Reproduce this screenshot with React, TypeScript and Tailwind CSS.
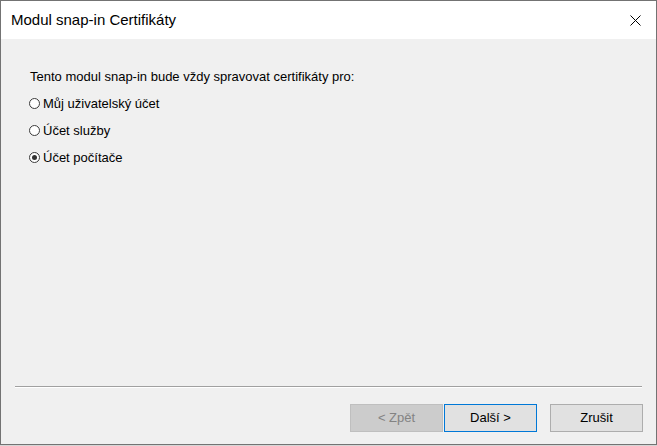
import React from "react";

const font = { fontFamily: '"Liberation Sans", Arial, sans-serif' };

function Radio({ label, checked }: { label: string; checked?: boolean }) {
  return (
    <div className="h-[27px] flex items-center">
      <span className="ml-[-1px] mb-[1px] w-[11px] h-[11px] rounded-full border border-[#3c3c3c] bg-white flex items-center justify-center shrink-0">
        {checked && <span className="w-[5px] h-[5px] rounded-full bg-[#333333]" />}
      </span>
      <span className="ml-[3px] text-[13px] text-black leading-[27px]">{label}</span>
    </div>
  );
}

function Btn({
  children,
  variant,
}: {
  children: React.ReactNode;
  variant: "disabled" | "default" | "normal";
}) {
  const cls =
    variant === "disabled"
      ? "bg-[#cccccc] border-[#bfbfbf] text-[#838383]"
      : variant === "default"
      ? "bg-[#e1e1e1] border-[#0078d7] text-black"
      : "bg-[#e1e1e1] border-[#adadad] text-black";
  return (
    <div
      className={`w-[93px] h-[28px] border flex items-center justify-center text-[13px] ${cls}`}
    >
      {children}
    </div>
  );
}

export default function App() {
  return (
    <div className="w-[657px] h-[446px] bg-[#d6d6d6] overflow-hidden" style={font}>
      <div className="w-[657px] h-[445px] border border-[#737373] flex flex-col">
        <div className="h-[38px] bg-white flex items-center justify-between pl-[10px] pr-[15px] shrink-0">
          <span className="text-[15px] text-black leading-[38px]">Modul snap-in Certifikáty</span>
          <svg width="11" height="11" viewBox="0 0 11 11" className="block">
            <path d="M0.5 0.5 L10.5 10.5 M10.5 0.5 L0.5 10.5" stroke="#000" strokeWidth="1" />
          </svg>
        </div>
        <div className="flex-1 bg-[#f0f0f0] flex flex-col">
          <div className="pt-[24px] pl-[29px] flex flex-col">
            <div className="h-[27px] leading-[27px] text-[13px] text-black">
              Tento modul snap-in bude vždy spravovat certifikáty pro:
            </div>
            <Radio label="Můj uživatelský účet" />
            <Radio label="Účet služby" />
            <Radio label="Účet počítače" checked />
          </div>
          <div className="flex-1" />
          <div className="mx-[14px] h-[2px] border-t border-[#a0a0a0] border-b border-b-white" />
          <div className="flex justify-end pt-[16px] pb-[12px] pr-[13px]">
            <Btn variant="disabled">&lt; Zpět</Btn>
            <div className="w-[1px]" />
            <Btn variant="default">Další &gt;</Btn>
            <div className="w-[13px]" />
            <Btn variant="normal">Zrušit</Btn>
          </div>
        </div>
      </div>
    </div>
  );
}
